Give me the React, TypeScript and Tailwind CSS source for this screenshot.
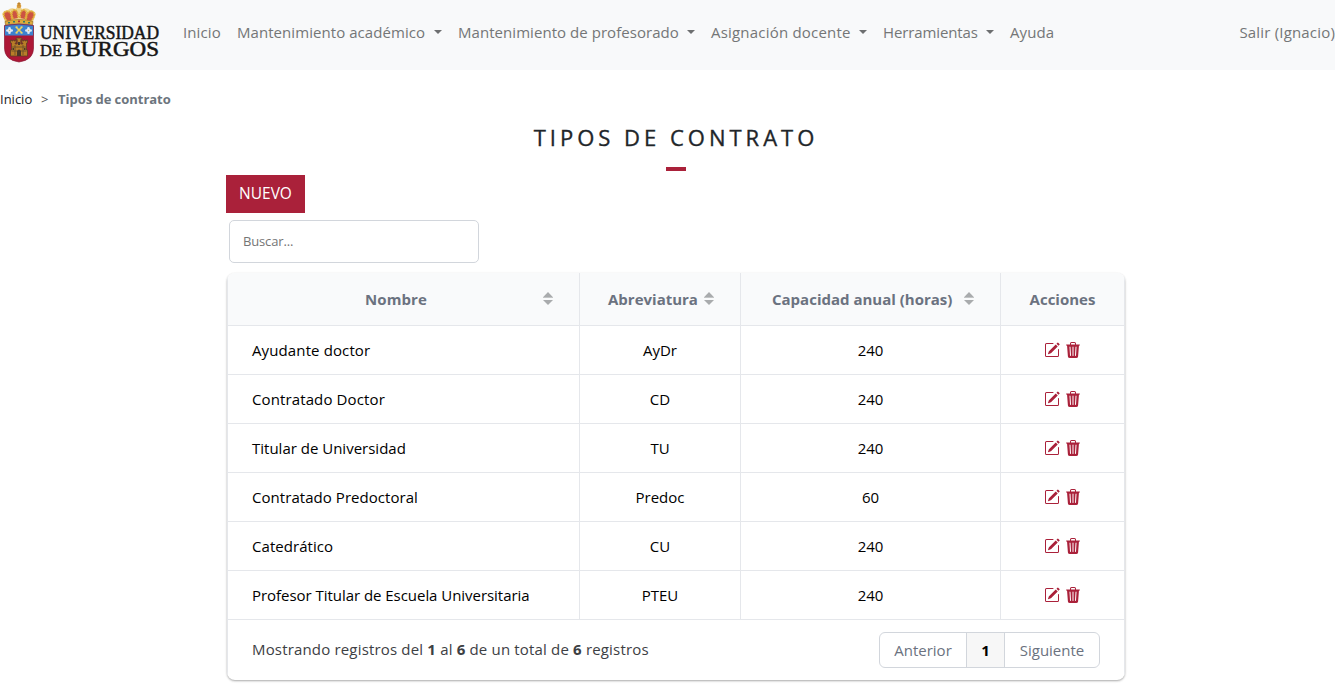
import React from "react";
import { BsPencilSquare, BsTrash3Fill } from "react-icons/bs";

const rows = [
  { name: "Ayudante doctor", short: "AyDr", hours: "240", tracking: "tracking-[0.12px]" },
  { name: "Contratado Doctor", short: "CD", hours: "240", tracking: "tracking-[0.12px]" },
  { name: "Titular de Universidad", short: "TU", hours: "240", tracking: "tracking-normal" },
  { name: "Contratado Predoctoral", short: "Predoc", hours: "60", tracking: "tracking-[0.05px]" },
  { name: "Catedrático", short: "CU", hours: "240", tracking: "tracking-[0.06px]" },
  { name: "Profesor Titular de Escuela Universitaria", short: "PTEU", hours: "240", tracking: "tracking-[-0.04px]" },
];

const navItems = [
  { label: "Inicio", menu: false, style: "w-[54px] tracking-[0.1px]" },
  { label: "Mantenimiento académico", menu: true, style: "w-[221px] tracking-[0.06px]" },
  { label: "Mantenimiento de profesorado", menu: true, style: "w-[253px] tracking-[0.05px]" },
  { label: "Asignación docente", menu: true, style: "w-[172px] tracking-[0.2px]" },
  { label: "Herramientas", menu: true, style: "w-[127px] tracking-[-0.12px]" },
  { label: "Ayuda", menu: false, style: "w-[60px] tracking-[0.1px]" },
];

function Logo() {
  return (
    <svg width="162" height="66" viewBox="0 0 162 66" role="img" aria-label="Universidad de Burgos">
      {/* Crown */}
      <path d="M5.5 23 2 14Q4 10 8 10Q11 7 15.5 9L18.5 5L22 9Q27 7 30 10Q34 10 36 14L32.5 23Q19 19.5 5.5 23Z" fill="#eed38a" />
      <path d="M7 21Q2 15 5 12Q9 10 11 14L12 20M13 19Q10 11 14.5 10Q18 10 18 18M20 18Q20 10 24 10Q28 11 25 19M26 20L27 14Q30 10 33 12Q36 15 31 21" fill="#cc5342" stroke="#e0ae38" strokeWidth="1.8" strokeDasharray="1.6 .6" />
      <path d="M5 21.5Q19 17.5 33 21.5L32.5 25Q19 22 5.5 25Z" fill="#dfad3a" stroke="#8d6528" strokeWidth=".6" />
      <path d="M8 22.8h2M13 21.7h2M23 21.7h2M28 22.8h2" stroke="#397b64" strokeWidth="1.5" />
      <path d="M18 21.4h2" stroke="#b42d3c" strokeWidth="1.7" />
      <circle cx="19" cy="6" r="2.3" fill="#d99a3b" />
      <path d="M19 2v4M17.4 3.5h3.2" stroke="#bd812d" strokeWidth="1" />
      {/* Shield */}
      <path d="M4.5 25.5Q19 22.7 33.5 25.5V48Q33.5 60 19 62Q4.5 60 4.5 48Z" fill="#ac1736" />
      <path d="M4.5 25.5Q19 22.7 33.5 25.5V35.5h-29Z" fill="#3c82ce" />
      <path d="M4.5 25.5Q19 22.7 33.5 25.5V48Q33.5 60 19 62Q4.5 60 4.5 48Z" fill="none" stroke="#8b1833" strokeWidth=".7" />
      <path d="M16 27 22 33M22 27 16 33" stroke="#ead05a" strokeWidth="1.6" />
      <path d="M15.5 27h2.2M20.5 27h2.2M15.5 33h2.2M20.5 33h2.2" stroke="#f2dd7c" strokeWidth="1" />
      <g fill="#dfe9f2">
        <circle cx="9.5" cy="30.5" r="2" /><circle cx="9.5" cy="28.4" r="1.3" /><circle cx="9.5" cy="32.7" r="1.3" /><circle cx="7.4" cy="30.5" r="1.3" /><circle cx="11.7" cy="30.5" r="1.3" />
        <circle cx="28.5" cy="30.5" r="2" /><circle cx="28.5" cy="28.4" r="1.3" /><circle cx="28.5" cy="32.7" r="1.3" /><circle cx="26.4" cy="30.5" r="1.3" /><circle cx="30.7" cy="30.5" r="1.3" />
      </g>
      <circle cx="9.5" cy="30.5" r=".7" fill="#d4b867" /><circle cx="28.5" cy="30.5" r=".7" fill="#d4b867" />
      {/* Castle */}
      <path d="M10.5 56V50h1V43h-1v-3h1.2v1h1.2v-1h1.3v1h1v-1h1v3h-1v1h2v-4.5h-1v-1.5h5.6v1.5h-1V44h2v-1h-1v-3h1v1h1v-1h1.3v1h1.2v-1h1.2v3h-1v7h1v6Z" fill="#b97d28" stroke="#5d4024" strokeWidth=".8" />
      <path d="M12 47h14M11.5 51h15M15 45v10M23 45v10" stroke="#644b28" strokeWidth=".8" />
      <path d="M17 56v-5q2-3 4 0v5ZM12.5 48h1.5v2h-1.5ZM24 48h1.5v2H24ZM18 42h2v3h-2Z" fill="#49382a" />
      <g fontFamily="Liberation Serif, serif" fill="#161616" stroke="#161616" strokeWidth=".5">
        <text x="40" y="39" fontSize="18" textLength="119" lengthAdjust="spacingAndGlyphs">UNIVERSIDAD</text>
        <text x="40" y="56" fontSize="17" textLength="22" lengthAdjust="spacingAndGlyphs">DE</text>
        <text x="65.5" y="56" fontSize="20" textLength="93.5" lengthAdjust="spacingAndGlyphs">BURGOS</text>
      </g>
    </svg>
  );
}

function SortIcon() {
  return (
    <svg width="10" height="14" viewBox="0 0 10 14" className="shrink-0">
      <path d="M5 0 10 5.2H0Z" fill="#a9abad" />
      <path d="M0 5h10v1H0Z" fill="#c3c5c6" />
      <path d="M0 8h10L5 13Z" fill="#a9abad" />
    </svg>
  );
}

const columns = "grid grid-cols-[352px_161px_260px_125px]";

export default function App() {
  return (
    <div className="h-[684px] w-full overflow-hidden bg-white font-['Open_Sans',sans-serif] text-[15px] text-black">
      <nav className="flex h-[70px] bg-[#f8f9fa] text-[#747677]">
        <div className="w-[183px] shrink-0"><Logo /></div>
        <div className="flex h-16 items-center">
          {navItems.map((item) => (
            <a key={item.label} className={`flex items-center whitespace-nowrap ${item.style}`}>
              {item.label}
              {item.menu && <span className="mr-4 ml-auto border-x-[4.8px] border-t-[4.8px] border-x-transparent border-t-[#6d6f70]" />}
            </a>
          ))}
        </div>
        <a className="ml-auto flex h-16 items-center whitespace-nowrap tracking-[0.18px]">Salir (Ignacio)</a>
      </nav>
      <div className="flex h-[58px] items-center pt-0.5 text-[13px]">
        <span className="w-[41px] text-[#212529]">Inicio</span>
        <span className="w-[17px] text-[#555]">&gt;</span>
        <b className="tracking-[-0.03px] text-[#6c757d]">Tipos de contrato</b>
      </div>
      <div className="ml-[226px] w-[899px]">
        <header className="flex h-[47px] flex-col items-center">
          <h1 className="mt-[-7px] h-[32px] pl-px text-[22px] leading-8 font-medium tracking-[4px] text-[#212529] [-webkit-text-stroke:0.35px_#212529]">TIPOS DE CONTRATO</h1>
          <div className="mt-[14px] h-1 w-5 shrink-0 bg-[#aa213a]" />
        </header>
        <button className="block h-[38px] w-[79px] bg-[#aa213a] text-[15.5px] text-white">NUEVO</button>
        <input placeholder="Buscar..." className="mt-[7px] ml-[3px] block h-[43px] w-[250px] rounded-[5px] border border-[#d2d6dc] px-[13px] pb-0.5 text-[13px] tracking-[-0.15px] outline-none placeholder:text-[#757575]" />
        <section className="mt-[10px] ml-px w-[898px] overflow-hidden rounded-lg shadow-[0_1px_3px_rgba(0,0,0,.1),0_1px_2px_rgba(0,0,0,.26)]">
          <div className={`${columns} h-[53px] bg-[#f9fafb] font-bold text-[#6b7280]`}>
            <div className="flex items-center border-b border-l border-[#e5e7eb] pr-[26px] pl-[21px]">
              <span className="grow text-center tracking-[0.1px]">Nombre</span><SortIcon />
            </div>
            <div className="flex items-center justify-between border-b border-l border-[#e5e7eb] pr-[26px] pl-7">Abreviatura<SortIcon /></div>
            <div className="flex items-center justify-between border-b border-l border-[#e5e7eb] pr-[26px] pl-[31px]">Capacidad anual (horas)<SortIcon /></div>
            <div className="flex items-center justify-center border-x border-b border-[#e5e7eb]">Acciones</div>
          </div>
          {rows.map((row) => (
            <div key={row.name} className={`${columns} h-[49px]`}>
              <div className={`flex items-center border-b border-l border-[#e5e7eb] pl-6 ${row.tracking}`}>{row.name}</div>
              <div className="flex items-center justify-center border-b border-l border-[#e5e7eb]">{row.short}</div>
              <div className="flex items-center justify-center border-b border-l border-[#e5e7eb]">{row.hours}</div>
              <div className="flex items-center justify-center gap-[5px] border-x border-b border-[#e5e7eb] pr-px text-[#aa213a]">
                <BsPencilSquare size={16} /><BsTrash3Fill size={16} />
              </div>
            </div>
          ))}
          <footer className="flex h-[60px] items-center border-x border-[#e5e7eb] pr-6 pl-6 text-[#3d4044]">
            <span className="pb-px tracking-[0.17px]">Mostrando registros del <b>1</b> al <b>6</b> de un total de <b>6</b> registros</span>
            <div className="ml-auto flex h-9 w-[221px] overflow-hidden rounded-md border border-[#d2d6dc] text-[#6b7280]">
              <button className="w-[86px]">Anterior</button>
              <button className="w-[39px] border-x border-[#d2d6dc] bg-[#f7f7f7] font-bold text-black">1</button>
              <button className="grow">Siguiente</button>
            </div>
          </footer>
        </section>
      </div>
    </div>
  );
}
